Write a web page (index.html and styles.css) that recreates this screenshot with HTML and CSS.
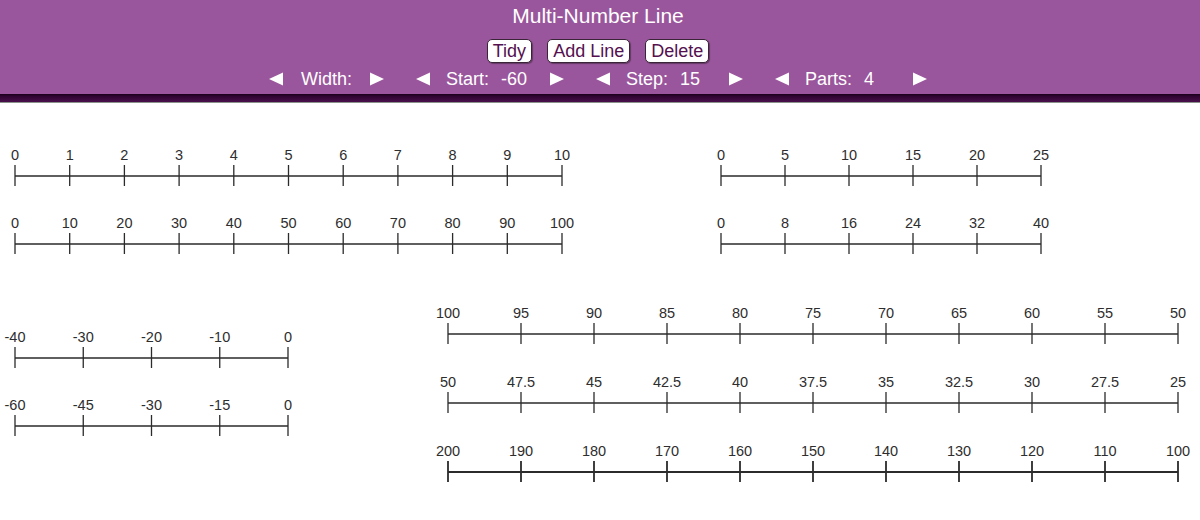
FILE: index.html
```html
<!DOCTYPE html>
<html lang="en">
<head>
<meta charset="utf-8">
<title>Multi-Number Line</title>
<link rel="stylesheet" href="styles.css">
</head>
<body>
<header class="top">
  <h1 class="title">Multi-Number Line</h1>
  <div class="buttons">
    <button class="btn">Tidy</button>
    <button class="btn">Add Line</button>
    <button class="btn">Delete</button>
  </div>
  <div class="controls">
    <div class="ctl">
      <svg class="arr" viewBox="0 0 14 14"><polygon points="0,7 14,0.5 14,13.5"/></svg>
      <span class="lbl lbl-only">Width:</span>
      <svg class="arr" viewBox="0 0 14 14"><polygon points="14,7 0,0.5 0,13.5"/></svg>
    </div>
    <div class="ctl">
      <svg class="arr" viewBox="0 0 14 14"><polygon points="0,7 14,0.5 14,13.5"/></svg>
      <span class="lbl">Start:</span>
      <span class="val">-60</span>
      <svg class="arr" viewBox="0 0 14 14"><polygon points="14,7 0,0.5 0,13.5"/></svg>
    </div>
    <div class="ctl">
      <svg class="arr" viewBox="0 0 14 14"><polygon points="0,7 14,0.5 14,13.5"/></svg>
      <span class="lbl">Step:</span>
      <span class="val">15</span>
      <svg class="arr" viewBox="0 0 14 14"><polygon points="14,7 0,0.5 0,13.5"/></svg>
    </div>
    <div class="ctl">
      <svg class="arr" viewBox="0 0 14 14"><polygon points="0,7 14,0.5 14,13.5"/></svg>
      <span class="lbl">Parts:</span>
      <span class="val">4</span>
      <svg class="arr" viewBox="0 0 14 14"><polygon points="14,7 0,0.5 0,13.5"/></svg>
    </div>
  </div>
</header>
<div class="bar"></div>

<svg class="board" viewBox="0 103 1200 417" width="1200" height="417">
  <!-- Line A: 0..10 -->
  <g class="nl" transform="translate(0,176)">
    <path d="M15 0H562 M15 -11V10 M69.7 -11V10 M124.4 -11V10 M179.1 -11V10 M233.8 -11V10 M288.5 -11V10 M343.2 -11V10 M397.9 -11V10 M452.6 -11V10 M507.3 -11V10 M562 -11V10"/>
    <text x="15" y="-16">0</text><text x="69.7" y="-16">1</text><text x="124.4" y="-16">2</text><text x="179.1" y="-16">3</text><text x="233.8" y="-16">4</text><text x="288.5" y="-16">5</text><text x="343.2" y="-16">6</text><text x="397.9" y="-16">7</text><text x="452.6" y="-16">8</text><text x="507.3" y="-16">9</text><text x="562" y="-16">10</text>
  </g>
  <!-- Line B: 0..100 -->
  <g class="nl" transform="translate(0,244)">
    <path d="M15 0H562 M15 -11V10 M69.7 -11V10 M124.4 -11V10 M179.1 -11V10 M233.8 -11V10 M288.5 -11V10 M343.2 -11V10 M397.9 -11V10 M452.6 -11V10 M507.3 -11V10 M562 -11V10"/>
    <text x="15" y="-16">0</text><text x="69.7" y="-16">10</text><text x="124.4" y="-16">20</text><text x="179.1" y="-16">30</text><text x="233.8" y="-16">40</text><text x="288.5" y="-16">50</text><text x="343.2" y="-16">60</text><text x="397.9" y="-16">70</text><text x="452.6" y="-16">80</text><text x="507.3" y="-16">90</text><text x="562" y="-16">100</text>
  </g>
  <!-- Line C: 0..25 -->
  <g class="nl" transform="translate(0,176)">
    <path d="M721 0H1041 M721 -11V10 M785 -11V10 M849 -11V10 M913 -11V10 M977 -11V10 M1041 -11V10"/>
    <text x="721" y="-16">0</text><text x="785" y="-16">5</text><text x="849" y="-16">10</text><text x="913" y="-16">15</text><text x="977" y="-16">20</text><text x="1041" y="-16">25</text>
  </g>
  <!-- Line D: 0..40 -->
  <g class="nl" transform="translate(0,244)">
    <path d="M721 0H1041 M721 -11V10 M785 -11V10 M849 -11V10 M913 -11V10 M977 -11V10 M1041 -11V10"/>
    <text x="721" y="-16">0</text><text x="785" y="-16">8</text><text x="849" y="-16">16</text><text x="913" y="-16">24</text><text x="977" y="-16">32</text><text x="1041" y="-16">40</text>
  </g>
  <!-- Line E: -40..0 -->
  <g class="nl" transform="translate(0,358)">
    <path d="M15 0H288 M15 -11V10 M83.25 -11V10 M151.5 -11V10 M219.75 -11V10 M288 -11V10"/>
    <text x="15" y="-16">-40</text><text x="83.25" y="-16">-30</text><text x="151.5" y="-16">-20</text><text x="219.75" y="-16">-10</text><text x="288" y="-16">0</text>
  </g>
  <!-- Line F: -60..0 -->
  <g class="nl" transform="translate(0,426)">
    <path d="M15 0H288 M15 -11V10 M83.25 -11V10 M151.5 -11V10 M219.75 -11V10 M288 -11V10"/>
    <text x="15" y="-16">-60</text><text x="83.25" y="-16">-45</text><text x="151.5" y="-16">-30</text><text x="219.75" y="-16">-15</text><text x="288" y="-16">0</text>
  </g>
  <!-- Line G: 100..50 -->
  <g class="nl" transform="translate(0,334)">
    <path d="M448 0H1178 M448 -11V10 M521 -11V10 M594 -11V10 M667 -11V10 M740 -11V10 M813 -11V10 M886 -11V10 M959 -11V10 M1032 -11V10 M1105 -11V10 M1178 -11V10"/>
    <text x="448" y="-16">100</text><text x="521" y="-16">95</text><text x="594" y="-16">90</text><text x="667" y="-16">85</text><text x="740" y="-16">80</text><text x="813" y="-16">75</text><text x="886" y="-16">70</text><text x="959" y="-16">65</text><text x="1032" y="-16">60</text><text x="1105" y="-16">55</text><text x="1178" y="-16">50</text>
  </g>
  <!-- Line H: 50..25 -->
  <g class="nl" transform="translate(0,403)">
    <path d="M448 0H1178 M448 -11V10 M521 -11V10 M594 -11V10 M667 -11V10 M740 -11V10 M813 -11V10 M886 -11V10 M959 -11V10 M1032 -11V10 M1105 -11V10 M1178 -11V10"/>
    <text x="448" y="-16">50</text><text x="521" y="-16">47.5</text><text x="594" y="-16">45</text><text x="667" y="-16">42.5</text><text x="740" y="-16">40</text><text x="813" y="-16">37.5</text><text x="886" y="-16">35</text><text x="959" y="-16">32.5</text><text x="1032" y="-16">30</text><text x="1105" y="-16">27.5</text><text x="1178" y="-16">25</text>
  </g>
  <!-- Line I: 200..100 -->
  <g class="nl nl-bold" transform="translate(0,472)">
    <path d="M448 0H1178 M448 -11V10 M521 -11V10 M594 -11V10 M667 -11V10 M740 -11V10 M813 -11V10 M886 -11V10 M959 -11V10 M1032 -11V10 M1105 -11V10 M1178 -11V10"/>
    <text x="448" y="-16">200</text><text x="521" y="-16">190</text><text x="594" y="-16">180</text><text x="667" y="-16">170</text><text x="740" y="-16">160</text><text x="813" y="-16">150</text><text x="886" y="-16">140</text><text x="959" y="-16">130</text><text x="1032" y="-16">120</text><text x="1105" y="-16">110</text><text x="1178" y="-16">100</text>
  </g>
</svg>
</body>
</html>
```

FILE: styles.css
```css
html, body {
  margin: 0;
  padding: 0;
  background: #ffffff;
  font-family: "Liberation Sans", Arial, sans-serif;
}

.top {
  box-sizing: border-box;
  height: 94px;
  background: #9a569c;
  display: flex;
  flex-direction: column;
  align-items: center;
  padding-right: 4px;
}

.title {
  margin: 4px 0 0;
  font-size: 21px;
  line-height: 24px;
  font-weight: normal;
  color: #ffffff;
}

.buttons {
  margin-top: 11px;
  display: flex;
  gap: 15px;
}

.btn {
  box-sizing: border-box;
  height: 24px;
  margin: 0;
  padding: 0 5px;
  border: 1.5px solid #3a2438;
  border-radius: 5px;
  background: #ffffff;
  box-shadow: 1px 1px 1px rgba(0, 0, 0, 0.35);
  font-family: "Liberation Sans", Arial, sans-serif;
  font-size: 18px;
  line-height: 20px;
  color: #55104f;
}

.controls {
  margin-top: 5px;
  height: 22px;
  display: flex;
  align-items: center;
  gap: 32px;
  color: #ffffff;
  font-size: 18px;
  line-height: 22px;
}

.ctl {
  display: flex;
  align-items: center;
}

.arr {
  width: 14px;
  height: 14px;
  fill: #ffffff;
  display: block;
}

.lbl {
  margin-left: 16px;
}

.lbl-only {
  margin-left: 18px;
  margin-right: 18px;
}

.val {
  margin-left: 12px;
  width: 37px;
  margin-right: 12px;
}

.bar {
  height: 8px;
  background: linear-gradient(#1a001a 0%, #2e0530 30%, #4a0f4c 100%);
  border-bottom: 1px solid #8a948a;
}

.board {
  display: block;
}

.nl path {
  fill: none;
  stroke: #2b2b2b;
  stroke-width: 1.3;
}

.nl-bold path {
  stroke-width: 1.8;
}

.nl text {
  font-family: "Liberation Sans", Arial, sans-serif;
  font-size: 14.5px;
  fill: #2e2e2e;
  text-anchor: middle;
}
```
